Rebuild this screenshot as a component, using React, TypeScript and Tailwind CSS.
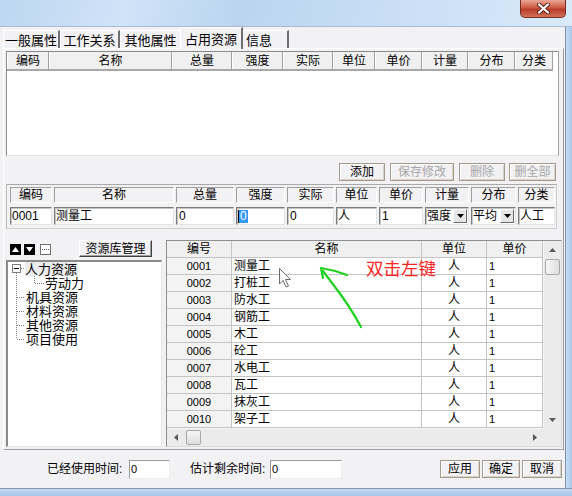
import React from "react";

const F = "font-['Liberation_Sans','Noto_Sans_CJK_SC',sans-serif]";

const topCols = [
  { t: "编码", w: "w-[42px]" },
  { t: "名称", w: "w-[123px]" },
  { t: "总量", w: "w-[60px]" },
  { t: "强度", w: "w-[51px]" },
  { t: "实际", w: "w-[50px]" },
  { t: "单位", w: "w-[42px]" },
  { t: "单价", w: "w-[47px]" },
  { t: "计量", w: "w-[46px]" },
  { t: "分布", w: "w-[47px]" },
  { t: "分类", w: "w-[38px]" },
];

const names = ["测量工", "打桩工", "防水工", "钢筋工", "木工", "砼工", "水电工", "瓦工", "抹灰工", "架子工"];

const inputCls =
  "h-[18px] bg-white border-t border-l border-[#7c7c7c] border-b border-r border-b-[#e4e4e4] border-r-[#e4e4e4] shadow-[inset_1px_1px_0_#c4c4c4] flex items-center text-[12px] leading-none text-black overflow-hidden";

const hdrCell =
  "h-[16px] border-t border-l border-[#a0a0a0] border-b border-r border-b-white border-r-white flex items-center justify-center text-[12px] leading-none";

function Btn({ children, w, disabled }: { children: React.ReactNode; w: string; disabled?: boolean }) {
  return (
    <div
      className={`${w} h-[18px] border border-[#a39a8c] shadow-[inset_1px_1px_0_#ffffff,inset_-1px_-1px_0_#d8d4cc] flex items-center justify-center text-[12px] leading-none ${
        disabled ? "text-[#a7a7a7]" : "text-black"
      }`}
    >
      {children}
    </div>
  );
}

function DropBtn() {
  return (
    <div className="w-[14px] h-[14px] bg-[#e6e6e6] border-t border-l border-white border-b border-r border-b-[#6a6a6a] border-r-[#6a6a6a] flex items-center justify-center">
      <svg width="7" height="4" viewBox="0 0 7 4">
        <polygon points="0,0 7,0 3.5,4" fill="#000" />
      </svg>
    </div>
  );
}

function Arrow({ dir }: { dir: "up" | "down" | "left" | "right" }) {
  const pts =
    dir === "up" ? "0,4 7,4 3.5,0" : dir === "down" ? "0,0 7,0 3.5,4" : dir === "left" ? "4,0 4,7 0,3.5" : "0,0 0,7 4,3.5";
  const w = dir === "up" || dir === "down" ? 7 : 4;
  const h = dir === "up" || dir === "down" ? 4 : 7;
  return (
    <svg width={w} height={h} viewBox={`0 0 ${w} ${h}`}>
      <polygon points={pts} fill="#5a5a5a" />
    </svg>
  );
}

export default function App() {
  return (
    <div className={`${F} w-[572px] h-[496px] relative overflow-hidden bg-[#f2f1f4] flex flex-col text-black`}>
      {/* title bar */}
      <div className="h-[27px] shrink-0 flex justify-end pr-[6px] bg-[linear-gradient(105deg,#bdd6f1_0%,#d0e3f7_22%,#bad4f0_42%,#c9def5_68%,#d9eaf9_100%)] border-b border-[#a6bcd6]">
        <div className="w-[46px] h-[18px] rounded-b-[5px] border border-t-0 border-[#7a2b20] bg-[linear-gradient(#e9a797,#cf5a43_45%,#b63c28_55%,#d2735b)] flex items-center justify-center">
          <svg width="15" height="11" viewBox="0 0 15 11">
            <path d="M3,1.5 L12,9.5 M12,1.5 L3,9.5" stroke="#5b1b12" strokeWidth="4" strokeLinecap="round" />
            <path d="M3,1.5 L12,9.5 M12,1.5 L3,9.5" stroke="#ffffff" strokeWidth="2.2" strokeLinecap="round" />
          </svg>
        </div>
      </div>

      <div className="flex flex-1 min-h-0">
        {/* content column */}
        <div className="w-[565px] flex flex-col">
          {/* tabs */}
          <div className="h-[21px] shrink-0 flex items-end pl-[3px] text-[13px] leading-none relative z-10">
            <div className="w-[57px] h-[18px] border-t border-l border-white border-r-2 border-r-[#6e6e6e] flex items-center justify-center pt-[1px]">一般属性</div>
            <div className="w-[60px] h-[18px] border-t border-l border-white border-r-2 border-r-[#6e6e6e] flex items-center justify-center pt-[1px]">工作关系</div>
            <div className="w-[60px] h-[18px] border-t border-l border-white flex items-center justify-center pt-[1px]">其他属性</div>
            <div className="w-[63px] h-[22px] mb-[-1px] bg-[#f2f1f4] border-t border-l border-white border-r-2 border-r-[#6e6e6e] flex items-start justify-center pt-[5px]">占用资源</div>
            <div className="w-[46px] h-[18px] border-t border-white border-r-2 border-r-[#6e6e6e] flex items-center justify-start pl-[3px] pt-[1px]">信息</div>
          </div>

          {/* panel */}
          <div className="h-[402px] shrink-0 ml-[3px] mr-[1px] border-t border-l border-white border-r border-b border-r-[#9a9a9a] border-b-[#a0a0a0] flex flex-col">
            {/* top grid */}
            <div className="ml-[2px] mt-[2px] w-[553px] h-[105px] bg-white border border-[#a0a0a0] border-t-[#8a8a8a] border-l-[#8a8a8a] border-b-[#e2e2e2] flex flex-col">
              <div className="flex h-[19px] shrink-0">
                <div className="flex bg-[#f0f0f0] border-b-2 border-[#a8a8a8]">
                  {topCols.map((c) => (
                    <div
                      key={c.t}
                      className={`${c.w} h-[17px] border-l border-white border-r border-r-[#a0a0a0] flex items-center justify-center text-[12px] leading-none`}
                    >
                      {c.t}
                    </div>
                  ))}
                </div>
              </div>
            </div>

            {/* buttons */}
            <div className="mt-[7px] h-[18px] shrink-0 flex justify-end pr-[7px]">
              <Btn w="w-[46px]">添加</Btn>
              <div className="w-[5px]" />
              <Btn w="w-[64px]" disabled>保存修改</Btn>
              <div className="w-[5px]" />
              <Btn w="w-[46px]" disabled>删除</Btn>
              <div className="w-[4px]" />
              <Btn w="w-[47px]" disabled>删全部</Btn>
            </div>

            {/* edit box */}
            <div className="mt-[3px] ml-[2px] w-[551px] h-[45px] shrink-0 border border-[#cfcfcf] border-t-[#a9a9a9] border-l-[#bcbcbc] pl-[3px] pt-[2px]">
              <div className="grid grid-cols-[42px_120px_58px_49px_47px_41px_44px_44px_45px_37px] gap-x-[2px] gap-y-[4px]">
                <div className={hdrCell}>编码</div>
                <div className={hdrCell}>名称</div>
                <div className={hdrCell}>总量</div>
                <div className={hdrCell}>强度</div>
                <div className={hdrCell}>实际</div>
                <div className={hdrCell}>单位</div>
                <div className={hdrCell}>单价</div>
                <div className={hdrCell}>计量</div>
                <div className={hdrCell}>分布</div>
                <div className={hdrCell}>分类</div>

                <div className={`${inputCls} pl-[1px] text-[11px]`}>0001</div>
                <div className={`${inputCls} pl-[1px]`}>测量工</div>
                <div className={`${inputCls} pl-[2px] text-[11px] text-[#808080]`}>0</div>
                <div className={`${inputCls} pl-[1px] text-[11px]`}>
                  <span className="bg-[#3399ff] text-white h-[13px] px-[1px] flex items-center border-l border-black">0</span>
                </div>
                <div className={`${inputCls} pl-[2px] text-[11px]`}>0</div>
                <div className={`${inputCls} pl-[1px]`}>人</div>
                <div className={`${inputCls} pl-[2px] text-[11px]`}>1</div>
                <div className={`${inputCls} pl-[1px] justify-between pr-[1px]`}>
                  <span>强度</span>
                  <DropBtn />
                </div>
                <div className={`${inputCls} pl-[1px] justify-between pr-[1px]`}>
                  <span>平均</span>
                  <DropBtn />
                </div>
                <div className={`${inputCls} pl-[1px]`}>人工</div>
              </div>
            </div>

            {/* lower area */}
            <div className="mt-[11px] h-[207px] shrink-0 flex">
              {/* left */}
              <div className="ml-[2px] w-[156px] flex flex-col">
                <div className="h-[20px] flex items-start pt-[4px] pl-[4px]">
                  <div className="w-[11px] h-[11px] bg-black flex items-center justify-center">
                    <svg width="7" height="5" viewBox="0 0 7 5">
                      <polygon points="0,5 7,5 3.5,0" fill="#fff" />
                    </svg>
                  </div>
                  <div className="w-[11px] h-[11px] bg-black ml-[3px] flex items-center justify-center">
                    <svg width="7" height="5" viewBox="0 0 7 5">
                      <polygon points="0,0 7,0 3.5,5" fill="#fff" />
                    </svg>
                  </div>
                  <div className="w-[11px] h-[11px] bg-white border border-[#6e6e6e] ml-[5px] flex items-center justify-center">
                    <div className="w-[7px] border-t border-dotted border-[#555]" />
                  </div>
                  <div className="ml-[28px] mt-[-4px] w-[73px] h-[17px] border-t border-l border-white border-b border-r border-b-[#404040] border-r-[#404040] shadow-[inset_-1px_-1px_0_#a0a0a0] flex items-center justify-center text-[12px] leading-none">
                    资源库管理
                  </div>
                </div>
                <div className="h-[187px] bg-white border-t-2 border-l-2 border-[#8a8a8a] border-b border-r border-b-[#e6e6e6] border-r-[#e6e6e6] relative text-[13px] leading-none">
                  <svg className="absolute left-0 top-0" width="150" height="100" viewBox="0 0 150 100">
                    <rect x="4.5" y="2.5" width="8" height="8" fill="#fff" stroke="#808080" />
                    <line x1="6" y1="6.5" x2="11" y2="6.5" stroke="#000" />
                    <line x1="13" y1="6.5" x2="17" y2="6.5" stroke="#808080" strokeDasharray="1 1" />
                    <line x1="8.5" y1="11" x2="8.5" y2="77" stroke="#808080" strokeDasharray="1 1" />
                    <line x1="9" y1="35.5" x2="17" y2="35.5" stroke="#808080" strokeDasharray="1 1" />
                    <line x1="9" y1="49.5" x2="17" y2="49.5" stroke="#808080" strokeDasharray="1 1" />
                    <line x1="9" y1="63.5" x2="17" y2="63.5" stroke="#808080" strokeDasharray="1 1" />
                    <line x1="9" y1="77.5" x2="17" y2="77.5" stroke="#808080" strokeDasharray="1 1" />
                    <line x1="26.5" y1="12" x2="26.5" y2="21" stroke="#808080" strokeDasharray="1 1" />
                    <line x1="27" y1="21.5" x2="36" y2="21.5" stroke="#808080" strokeDasharray="1 1" />
                  </svg>
                  <div className="relative flex flex-col">
                    <div className="h-[14px] flex items-center pl-[17px]">
                      <span className="bg-[#ececec] h-[14px] flex items-center pr-[1px]">人力资源</span>
                    </div>
                    <div className="h-[14px] flex items-center pl-[37px]">劳动力</div>
                    <div className="h-[14px] flex items-center pl-[18px]">机具资源</div>
                    <div className="h-[14px] flex items-center pl-[18px]">材料资源</div>
                    <div className="h-[14px] flex items-center pl-[18px]">其他资源</div>
                    <div className="h-[14px] flex items-center pl-[18px]">项目使用</div>
                  </div>
                </div>
              </div>

              {/* right grid */}
              <div className="ml-[4px] w-[396px] h-[207px] border border-[#8e8e8e] border-b-[#dadada] border-r-[#dadada] flex flex-col bg-[#ececec]">
                <div className="flex h-[187px]">
                  <div className="w-[376px] flex flex-col bg-white">
                    <div className="flex h-[17px] bg-[#f0f0f0] border-b border-[#c4c4c4] text-[12px] leading-none">
                      <div className="w-[65px] border-r border-[#c4c4c4] flex items-center justify-center">编号</div>
                      <div className="w-[190px] border-r border-[#c4c4c4] flex items-center justify-center">名称</div>
                      <div className="w-[65px] border-r border-[#c4c4c4] flex items-center justify-center">单位</div>
                      <div className="w-[56px] border-r border-[#c4c4c4] flex items-center justify-center">单价</div>
                    </div>
                    {names.map((n, i) => (
                      <div key={n} className="flex h-[17px] border-b border-[#c4c4c4] leading-none">
                        <div className="w-[65px] bg-[#f3f3f3] border-r border-[#c4c4c4] flex items-center justify-center text-[11px]">
                          {String(i + 1).padStart(4, "0")}
                        </div>
                        <div className="w-[190px] border-r border-[#c4c4c4] flex items-center pl-[2px] text-[12px]">{n}</div>
                        <div className="w-[65px] border-r border-[#c4c4c4] flex items-center justify-center text-[12px]">人</div>
                        <div className="w-[56px] border-r border-[#c4c4c4] flex items-center pl-[2px] text-[11px]">1</div>
                      </div>
                    ))}
                  </div>
                  <div className="w-[18px] flex flex-col bg-[#ebebeb] border-l border-[#f6f6f6]">
                    <div className="h-[17px] flex items-center justify-center">
                      <Arrow dir="up" />
                    </div>
                    <div className="mt-[1px] ml-[1px] w-[15px] h-[16px] rounded-[2px] border border-[#a8a8a8] bg-[linear-gradient(90deg,#f6f6f6,#dedede)]" />
                    <div className="flex-1" />
                    <div className="h-[17px] flex items-center justify-center">
                      <Arrow dir="down" />
                    </div>
                  </div>
                </div>
                <div className="flex h-[17px]">
                  <div className="w-[376px] flex items-center bg-[#ebebeb] border-t border-[#f6f6f6]">
                    <div className="w-[17px] flex items-center justify-center">
                      <Arrow dir="left" />
                    </div>
                    <div className="ml-[2px] w-[15px] h-[15px] rounded-[2px] border border-[#a8a8a8] bg-[linear-gradient(#f6f6f6,#dedede)]" />
                    <div className="flex-1" />
                    <div className="w-[17px] flex items-center justify-center">
                      <Arrow dir="right" />
                    </div>
                  </div>
                  <div className="flex-1 bg-[#ebebeb]" />
                </div>
              </div>
            </div>
          </div>

          {/* footer */}
          <div className="h-[38px] shrink-0 flex items-center text-[12px] leading-none">
            <span className="ml-[47px] w-[82px]">已经使用时间:</span>
            <div className="w-[41px] h-[19px] bg-white border-t border-l border-[#9a9a9a] border-b border-r border-b-[#ececec] border-r-[#ececec] flex items-center pl-[1px] text-[11px]">0</div>
            <span className="ml-[20px] w-[80px]">估计剩余时间:</span>
            <div className="w-[72px] h-[19px] bg-white border-t border-l border-[#9a9a9a] border-b border-r border-b-[#ececec] border-r-[#ececec] flex items-center pl-[1px] text-[11px]">0</div>
            <div className="ml-auto mr-[3px] flex gap-[2px]">
              <Btn w="w-[40px]">应用</Btn>
              <Btn w="w-[38px]">确定</Btn>
              <Btn w="w-[40px]">取消</Btn>
            </div>
          </div>
        </div>

        {/* right frame */}
        <div className="w-[7px] border-l border-[#7d93ad] bg-[linear-gradient(90deg,#c6dcf3,#a9c7ea)]" />
      </div>

      {/* bottom frame */}
      <div className="h-[8px] shrink-0 border-t border-[#8298b2] bg-[linear-gradient(#c4daf3,#a7c5e8)]" />

      {/* overlay annotations */}
      <div className="absolute left-[366px] top-[259px] text-[17.5px] leading-none text-[#ff2424] font-['Noto_Sans_CJK_SC',sans-serif]">
        双击左键
      </div>
      <svg className="absolute left-0 top-0 pointer-events-none" width="572" height="496" viewBox="0 0 572 496">
        <path d="M321,268 Q334,270 347,275" stroke="#1fd11f" strokeWidth="2.2" fill="none" strokeLinecap="round" />
        <path d="M321,268 L323,278" stroke="#1fd11f" strokeWidth="2.2" fill="none" strokeLinecap="round" />
        <path d="M323,271 C333,285 347,300 361,327" stroke="#1fd11f" strokeWidth="2.2" fill="none" strokeLinecap="round" />
        <path d="M279.5,268.5 L279.5,284 L283,280.5 L286,287 L288.5,286 L285.5,279.5 L290.5,279.5 Z" fill="#ffffff" stroke="#6a6a6a" strokeWidth="1" strokeLinejoin="round" />
      </svg>
    </div>
  );
}
